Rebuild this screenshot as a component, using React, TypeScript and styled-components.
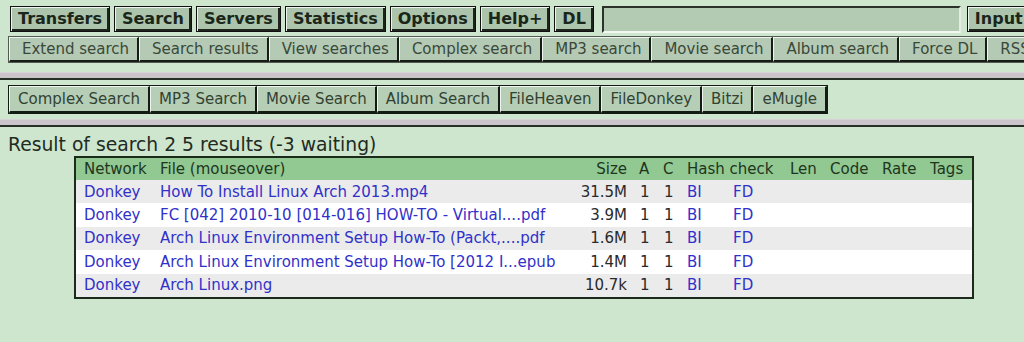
import React from "react";
import styled, { createGlobalStyle } from "styled-components";

const GlobalStyle = createGlobalStyle`
  html, body {
    margin: 0;
    padding: 0;
    background: #cde6cd;
    font-family: "DejaVu Sans", Verdana, sans-serif;
    overflow: hidden;
  }
`;

const Page = styled.div`
  width: 1024px;
  height: 342px;
  display: flex;
  flex-direction: column;
  overflow: hidden;
`;

const TopFrame = styled.div`
  height: 72px;
  flex: none;
  box-sizing: border-box;
  padding: 6px 0 0 8px;
  overflow: hidden;
  white-space: nowrap;
`;

const MainBar = styled.div`
  display: flex;
  align-items: center;
  gap: 4px;
  margin-left: 2px;
  height: 26px;
`;

const MainButton = styled.div`
  flex: none;
  height: 26px;
  box-sizing: border-box;
  display: flex;
  align-items: center;
  padding: 0 7px 1px 7px;
  background: #abc4ab;
  border: 1px solid #111;
  box-shadow: inset 1px 1px 0 #eef4ee, inset -2px -2px 0 #1c241c;
  font-weight: bold;
  font-size: 16px;
  color: #1a261a;
`;

const SearchField = styled.div`
  flex: none;
  width: 359px;
  height: 27px;
  box-sizing: border-box;
  margin: 0 2px 0 4px;
  background: #b3cbb3;
  border-top: 2px solid #2a322a;
  border-left: 2px solid #2a322a;
  border-bottom: 2px solid #f2f7f2;
  border-right: 2px solid #e4ece4;
`;

const SubBar = styled.div`
  display: inline-flex;
  margin-top: 4px;
  border: 1px solid #525a52;
`;

const SubItem = styled.div`
  flex: none;
  height: 22px;
  display: flex;
  align-items: center;
  padding: 0 8px 0 12px;
  background: #b4cab4;
  border-top: 1px solid #eef4ee;
  border-left: 1px solid #eef4ee;
  border-right: 2px solid #161c16;
  border-bottom: 2px solid #161c16;
  font-size: 15px;
  color: #3a483a;
`;

const FrameDivider = styled.div`
  flex: none;
  height: 6px;
  box-sizing: border-box;
  background: #ccc4cb;
  border-top: 1px solid #d8d2d8;
  margin-bottom: 2px;
  box-shadow: 0 2px 0 #263026;
`;

const SearchFrame = styled.div`
  height: 39px;
  flex: none;
  box-sizing: border-box;
  padding: 5px 0 0 8px;
  overflow: hidden;
  white-space: nowrap;
`;

const EngineBar = styled.div`
  display: inline-flex;
  border: 1px solid #141a14;
`;

const EngineItem = styled.div`
  flex: none;
  height: 24px;
  display: flex;
  align-items: center;
  padding: 0 8px;
  background: #b6ceb6;
  border-top: 1px solid #eef4ee;
  border-left: 1px solid #eef4ee;
  border-right: 2px solid #141a14;
  border-bottom: 2px solid #141a14;
  font-size: 15px;
  color: #324232;
`;

const ResultsFrame = styled.div`
  flex: 1;
  box-sizing: border-box;
  padding: 6px 0 0 8px;
`;

const ResultTitle = styled.div`
  font-size: 18.75px;
  line-height: 23px;
  color: #1f2b1f;
`;

const ResultTable = styled.div`
  width: 900px;
  box-sizing: border-box;
  margin: 0 0 0 66px;
  border: 2px solid #1c2a1c;
  font-size: 15px;
`;

const COLS = "76px 407px 60px 35px 25px 46px 57px 40px 52px 48px 36px";

const HeaderRow = styled.div`
  display: grid;
  grid-template-columns: ${COLS};
  align-items: center;
  height: 22px;
  padding: 0 6px 0 8px;
  background: #92c892;
  color: #1e361e;
`;

const Row = styled.div<{ $alt: boolean }>`
  display: grid;
  grid-template-columns: ${COLS};
  align-items: center;
  height: 23.4px;
  padding: 0 6px 0 8px;
  background: ${(p) => (p.$alt ? "#ebebeb" : "#ffffff")};
  color: #2a2a2a;
`;

const Cell = styled.div<{ $align?: "left" | "right"; $pad?: number; $span?: number; $link?: boolean }>`
  text-align: ${(p) => p.$align || "left"};
  padding-left: ${(p) => p.$pad || 0}px;
  grid-column: span ${(p) => p.$span || 1};
  white-space: nowrap;
  overflow: hidden;
  color: ${(p) => (p.$link ? "#3131c9" : "inherit")};
`;

const mainButtons = ["Transfers", "Search", "Servers", "Statistics", "Options", "Help+", "DL"];
const subItems = [
  "Extend search",
  "Search results",
  "View searches",
  "Complex search",
  "MP3 search",
  "Movie search",
  "Album search",
  "Force DL",
  "RSS",
  "Kill core",
];
const engines = [
  "Complex Search",
  "MP3 Search",
  "Movie Search",
  "Album Search",
  "FileHeaven",
  "FileDonkey",
  "Bitzi",
  "eMugle",
];

const results = [
  { file: "How To Install Linux Arch 2013.mp4", size: "31.5M" },
  { file: "FC [042] 2010-10 [014-016] HOW-TO - Virtual....pdf", size: "3.9M" },
  { file: "Arch Linux Environment Setup How-To (Packt,....pdf", size: "1.6M" },
  { file: "Arch Linux Environment Setup How-To [2012 I...epub", size: "1.4M" },
  { file: "Arch Linux.png", size: "10.7k" },
];

export default function App() {
  return (
    <>
      <GlobalStyle />
      <Page>
        <TopFrame>
          <MainBar>
            {mainButtons.map((b) => (
              <MainButton key={b}>{b}</MainButton>
            ))}
            <SearchField />
            <MainButton>Input</MainButton>
          </MainBar>
          <SubBar>
            {subItems.map((s) => (
              <SubItem key={s}>{s}</SubItem>
            ))}
          </SubBar>
        </TopFrame>
        <FrameDivider />
        <SearchFrame>
          <EngineBar>
            {engines.map((e) => (
              <EngineItem key={e}>{e}</EngineItem>
            ))}
          </EngineBar>
        </SearchFrame>
        <FrameDivider />
        <ResultsFrame>
          <ResultTitle>Result of search 2 5 results (-3 waiting)</ResultTitle>
          <ResultTable>
            <HeaderRow>
              <Cell>Network</Cell>
              <Cell>File (mouseover)</Cell>
              <Cell $align="right">Size</Cell>
              <Cell $pad={12}>A</Cell>
              <Cell $pad={1}>C</Cell>
              <Cell $span={2}>Hash check</Cell>
              <Cell>Len</Cell>
              <Cell>Code</Cell>
              <Cell>Rate</Cell>
              <Cell>Tags</Cell>
            </HeaderRow>
            {results.map((r, i) => (
              <Row key={r.file} $alt={i % 2 === 0}>
                <Cell $link>Donkey</Cell>
                <Cell $link>{r.file}</Cell>
                <Cell $align="right">{r.size}</Cell>
                <Cell $pad={13}>1</Cell>
                <Cell $pad={2}>1</Cell>
                <Cell $link>BI</Cell>
                <Cell $link>FD</Cell>
                <Cell />
                <Cell />
                <Cell />
                <Cell />
              </Row>
            ))}
          </ResultTable>
        </ResultsFrame>
      </Page>
    </>
  );
}
